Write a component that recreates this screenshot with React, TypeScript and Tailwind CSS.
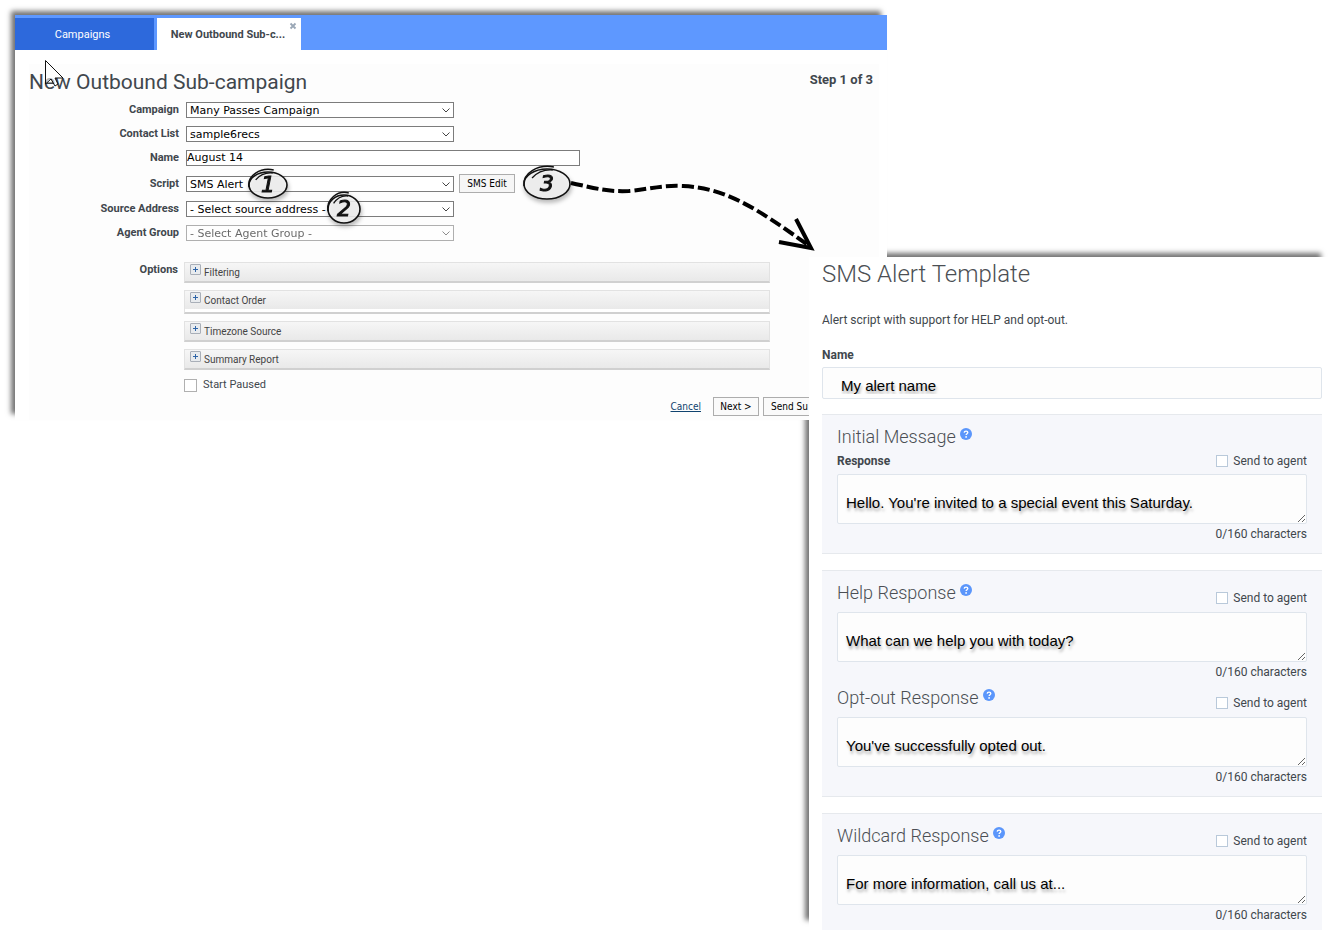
import React from 'react';

interface SelectFieldProps {
  id: string;
  value: string;
  disabled?: boolean;
}

const SelectField: React.FC<SelectFieldProps> = ({ id, value, disabled }) => (
  <div className={disabled ? 'relative w-[268px] h-4 opacity-60' : 'relative w-[268px] h-4'}>
    <select
      id={id}
      disabled={disabled}
      className="block w-full h-full appearance-none border border-[#7c7c7c] bg-white pt-px pl-[3px] pr-4 font-['DejaVu_Sans',sans-serif] text-[11px] leading-[13px] text-black opacity-100"
    >
      <option>{value}</option>
    </select>
    <svg className="absolute right-1 top-1 w-2 h-2 pointer-events-none" viewBox="0 0 8 8" fill="none" stroke="#444">
      <path d="M0.5 2.5 L4 6 L7.5 2.5" />
    </svg>
  </div>
);

interface FieldRowProps {
  id: string;
  label: string;
  children: React.ReactNode;
}

const FieldRow: React.FC<FieldRowProps> = ({ id, label, children }) => (
  <div className="flex items-center gap-[7px]">
    <label htmlFor={id} className="w-[150px] text-right text-[11px] leading-4 font-bold">
      {label}
    </label>
    {children}
  </div>
);

const options = [
  { name: 'Filtering', open: false },
  { name: 'Contact Order', open: true },
  { name: 'Timezone Source', open: false },
  { name: 'Summary Report', open: false }
];

const OptionBar: React.FC<{ name: string; open: boolean }> = ({ name, open }) => (
  <div className={open ? 'h-6 border border-b-2 border-[#e2e2e2] border-b-[#d0d0d0] bg-white' : 'h-[21px] border border-b-2 border-[#e2e2e2] border-b-[#d0d0d0]'}>
    <button className="flex h-[18px] w-full items-center gap-[3px] bg-linear-to-b from-[#f6f6f6] to-[#e9e9e9] pl-[5px] text-left text-[10px] leading-[18px] text-[#444]">
      <svg className="mb-[6px] w-[11px] h-[11px]" viewBox="0 0 11 11" fill="none">
        <rect x="0.5" y="0.5" width="10" height="10" rx="0.5" fill="#e8ebee" stroke="#a9afb8" />
        <path d="M3 5.5 H8 M5.5 3 V8" stroke="#2f65a8" />
      </svg>
      <span className="pt-px">{name}</span>
    </button>
  </div>
);

const CampaignWindow: React.FC = () => (
  <section className="col-start-1 col-span-2 row-start-1 self-start mt-[15px] h-[405px] bg-white text-[#41474d] shadow-[-5px_-5px_5px_-1px_rgba(0,0,0,0.55)]">
    <nav className="flex h-[35px] items-end bg-[#5e98ff] text-[11px]">
      <a href="#campaigns" className="flex h-8 w-[139px] items-center justify-center bg-[#2d69dc] pt-[3px] pr-1 text-white">
        Campaigns
      </a>
      <div className="relative ml-[3px] flex h-8 w-36 items-center justify-center bg-white pt-[3px] pr-[2px] font-bold">
        <a href="#new">New Outbound Sub-c...</a>
        <button className="absolute right-1 top-1 h-2 w-2" aria-label="Close tab">
          <svg viewBox="0 0 8 8" className="block w-2 h-2" stroke="#9aa7b6" strokeWidth="1.8">
            <path d="M1.5 1.5 L6.5 6.5 M6.5 1.5 L1.5 6.5" />
          </svg>
        </button>
      </div>
    </nav>

    <div className="mt-[14px] mr-2 ml-[14px] h-[356px] bg-[#fdfdfd] pt-1">
      <div className="flex items-center justify-between pr-[6px]">
        <h1 className="text-[21px] leading-7">New Outbound Sub-campaign</h1>
        <span className="pb-1 text-[13px] font-bold">Step 1 of 3</span>
      </div>

      <div className="mt-[6px] flex flex-col gap-2">
        <FieldRow id="campaign" label="Campaign">
          <SelectField id="campaign" value="Many Passes Campaign" />
        </FieldRow>
        <FieldRow id="contacts" label="Contact List">
          <SelectField id="contacts" value="sample6recs" />
        </FieldRow>
        <FieldRow id="subName" label="Name">
          <input
            id="subName"
            defaultValue="August 14"
            className="h-4 w-[394px] border border-[#7c7c7c] bg-white pt-px font-['DejaVu_Sans',sans-serif] text-[11px] text-black"
          />
        </FieldRow>
        <FieldRow id="script" label="Script">
          <SelectField id="script" value="SMS Alert" />
          <button className="-ml-[2px] h-[19px] w-14 border border-[#adadad] bg-[#f6f6f6] font-['DejaVu_Sans_Condensed',sans-serif] text-[10px] text-black">
            SMS Edit
          </button>
        </FieldRow>
        <FieldRow id="source" label="Source Address">
          <SelectField id="source" value="- Select source address -" />
        </FieldRow>
        <FieldRow id="group" label="Agent Group">
          <SelectField id="group" value="- Select Agent Group -" disabled />
        </FieldRow>
      </div>

      <div className="mt-[21px] flex gap-[6px] pr-[109px]">
        <span className="w-[149px] text-right text-[11px] leading-4 font-bold">Options</span>
        <div className="flex-1">
          <div className="flex flex-col gap-[7px]">
            {options.map(option => (
              <OptionBar key={option.name} name={option.name} open={option.open} />
            ))}
          </div>
          <label className="mt-[7px] flex items-center gap-[6px] text-[11px] leading-4">
            <input type="checkbox" className="h-[13px] w-[13px] appearance-none border border-[#b0b0b0] bg-white" />
            Start Paused
          </label>
        </div>
      </div>

      <div className="mt-1 flex items-center justify-end gap-1 pr-[52px] font-['DejaVu_Sans_Condensed',sans-serif] text-[10px] text-black">
        <a href="#cancel" className="mr-2 text-[#10436f] underline">Cancel</a>
        <button className="h-[19px] w-[46px] border border-[#adadad] bg-[#fafafa]">Next &gt;</button>
        <button className="h-[19px] w-16 border border-[#adadad] bg-[#fafafa] pl-[7px] text-left">Send Su</button>
      </div>
    </div>
  </section>
);

const HelpIcon: React.FC = () => (
  <svg className="w-3 h-3" viewBox="0 0 12 12" fill="none">
    <circle cx="6" cy="6" r="6" fill="#5b96fb" />
    <path d="M4.2 4.6 C4.3 2.6 7.8 2.6 7.8 4.6 C7.8 5.7 6.1 5.8 6.1 7.1" stroke="#fff" strokeWidth="1.4" />
    <circle cx="6.1" cy="8.9" r="0.9" fill="#fff" />
  </svg>
);

const SendToAgent: React.FC = () => (
  <label className="flex items-center gap-[5px] text-[12px]">
    <input type="checkbox" className="h-3 w-3 appearance-none border border-[#b9c9da] bg-white" />
    Send to agent
  </label>
);

interface ResponseFieldProps {
  title: string;
  text: string;
  label?: string;
}

const ResponseField: React.FC<ResponseFieldProps> = ({ title, text, label }) => {
  const heading = (
    <h3 className="flex h-[30px] items-center gap-1 text-[18px] font-light text-[#4b4f54]">
      {title}
      <span className="pb-1">
        <HelpIcon />
      </span>
    </h3>
  );

  return (
    <div>
      {label ? (
        <>
          {heading}
          <div className="mb-[3px] flex h-5 items-center justify-between text-[12px]">
            <span className="font-bold">{label}</span>
            <SendToAgent />
          </div>
        </>
      ) : (
        <div className="flex h-[35px] justify-between">
          {heading}
          <div className="flex items-center pt-[6px]">
            <SendToAgent />
          </div>
        </div>
      )}
      <textarea
        aria-label={title}
        defaultValue={text}
        className="block h-[50px] w-full resize-y overflow-hidden rounded-xs border border-[#dfe5ec] bg-[#fdfdfd] pt-[18px] pl-2 font-['Liberation_Sans',sans-serif] text-[15px] leading-5 text-black text-shadow-[1px_3px_3px_rgba(0,0,0,0.35)]"
      />
      <div className="text-right text-[12px] leading-5">0/160 characters</div>
    </div>
  );
};

const Card: React.FC<{ children: React.ReactNode }> = ({ children }) => (
  <div className="border-y border-[#e6e9ed] bg-[#f6f7fb] px-[15px] pt-[6px] pb-[9px] last:flex-1 last:border-b-0 last:pb-1">
    {children}
  </div>
);

const TemplateWindow: React.FC = () => (
  <section className="col-start-2 col-span-2 row-start-1 mt-[257px] flex flex-col bg-white pl-[13px] pr-[9px] text-[#41474d]">
    <h2 className="text-[24px] leading-[34px] font-light text-[#4b4f54]">SMS Alert Template</h2>
    <p className="mt-[19px] text-[12px] leading-5">Alert script with support for HELP and opt-out.</p>
    <label htmlFor="alertName" className="mt-[15px] text-[12px] leading-5 font-bold">Name</label>
    <input
      id="alertName"
      defaultValue="My alert name"
      className="mt-[2px] h-8 w-full rounded-xs border border-[#dfe5ec] bg-[#fdfdfd] pt-1 pl-[18px] font-['Liberation_Sans',sans-serif] text-[15px] text-black text-shadow-[1px_3px_3px_rgba(0,0,0,0.35)]"
    />
    <div className="mt-[15px] flex flex-1 flex-col gap-4">
      <Card>
        <ResponseField title="Initial Message" label="Response" text="Hello. You're invited to a special event this Saturday." />
      </Card>
      <Card>
        <ResponseField title="Help Response" text="What can we help you with today?" />
        <ResponseField title="Opt-out Response" text="You've successfully opted out." />
      </Card>
      <Card>
        <ResponseField title="Wildcard Response" text="For more information, call us at..." />
      </Card>
    </div>
  </section>
);

const Marker: React.FC<{ cx: number; cy: number; rx: number; ry: number; digit: string }> = ({ cx, cy, rx, ry, digit }) => (
  <g>
    <ellipse cx={cx} cy={cy} rx={rx} ry={ry} fill="#f4f4f4" fillOpacity="0.85" stroke="#111" strokeWidth="1.6" />
    <path
      d={`M${cx - rx} ${cy + 2} C${cx - rx - 2} ${cy - ry * 0.7} ${cx - rx * 0.4} ${cy - ry - 5} ${cx + rx * 0.3} ${cy - ry - 2}`}
      fill="none"
      stroke="#111"
      strokeWidth="1.5"
    />
    <path
      d={`M${cx - rx * 0.65} ${cy - ry * 0.4} Q${cx - rx * 0.3} ${cy - ry} ${cx + rx * 0.25} ${cy - ry + 1}`}
      fill="none"
      stroke="#111"
      strokeWidth="1.3"
    />
    <text x={cx} y={cy + 7} textAnchor="middle" className="font-['DejaVu_Sans',sans-serif] text-[22px] italic" fill="#111" stroke="#111" strokeWidth="1">
      {digit}
    </text>
  </g>
);

// numbered callouts, the dashed arrow and the mouse pointer
const Annotations: React.FC = () => (
  <svg className="pointer-events-none absolute top-0 left-0" width="840" height="260" viewBox="0 0 840 260" fill="none">
    <g className="drop-shadow-[1px_3px_2px_rgba(0,0,0,0.3)]">
      <Marker cx={268} cy={185} rx={19} ry={13} digit="1" />
      <Marker cx={344} cy={209} rx={16} ry={14} digit="2" />
      <Marker cx={547} cy={184} rx={23} ry={15} digit="3" />
    </g>
    <path
      d="M571 183 C595 188 606 192 629 191 C650 189 662 185 683 186 C725 188 755 207 808 245"
      stroke="#000"
      strokeWidth="4"
      strokeDasharray="12 4"
    />
    <path d="M796 219 L811 248 L779 242" stroke="#000" strokeWidth="4" />
    <path d="M45.5 60.5 V84 L51 79 L55 86 L58 84 L55 78 H63 Z" fill="#fff" fillOpacity="0.6" stroke="#111" />
  </svg>
);

export default function App() {
  return (
    <main className="relative grid min-h-screen grid-cols-[minmax(0,794fr)_minmax(0,78fr)_minmax(0,444fr)] overflow-hidden bg-white pl-[15px] font-[Roboto,sans-serif]">
      {/* the template's shadow lies under the campaign window */}
      <div className="col-start-2 col-span-2 row-start-1 mt-[257px] mr-1 mb-1 shadow-[-5px_-5px_5px_-1px_rgba(0,0,0,0.55)]" />
      <CampaignWindow />
      <TemplateWindow />
      <Annotations />
    </main>
  );
}
